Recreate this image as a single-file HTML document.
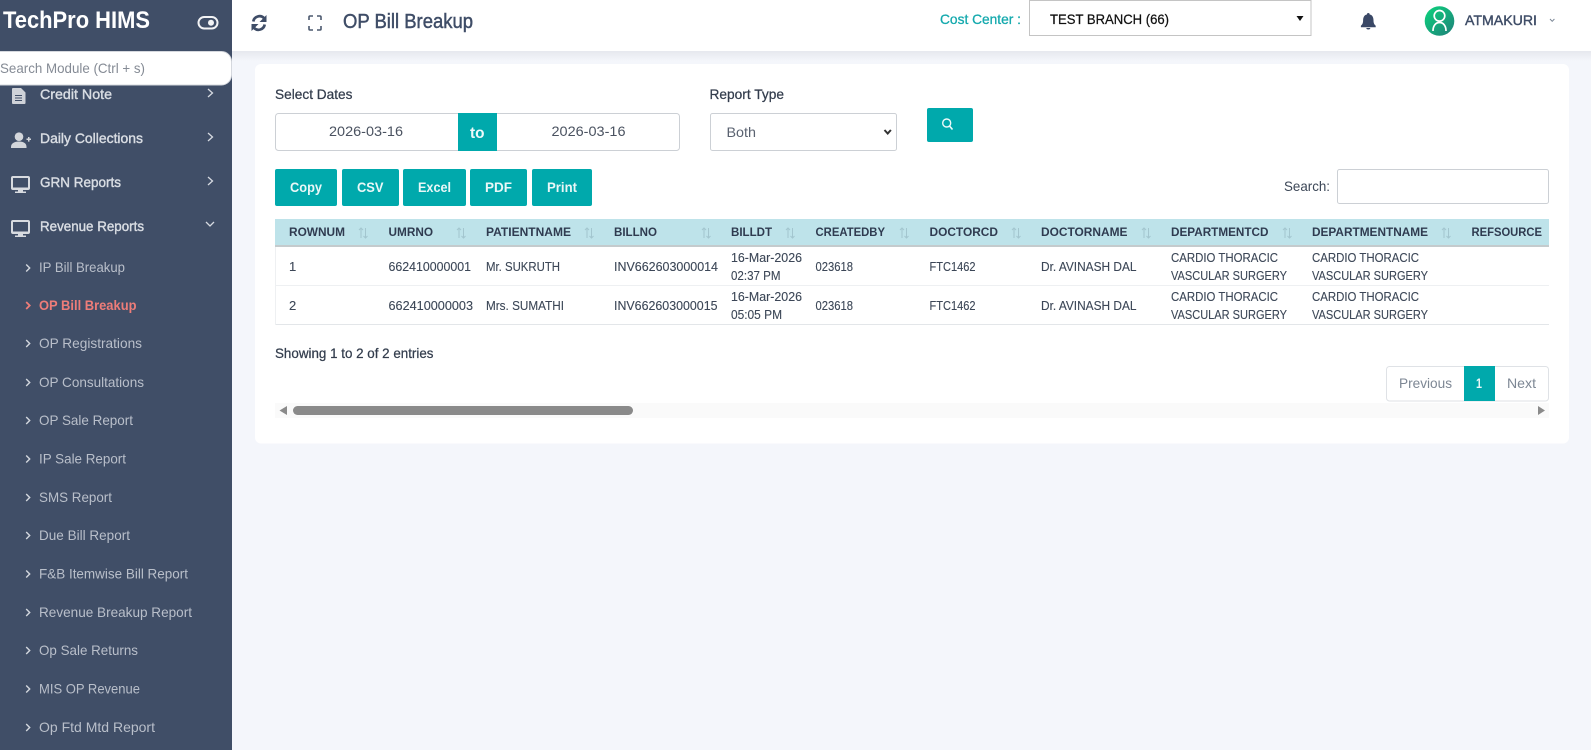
<!DOCTYPE html>
<html lang="en">
<head>
<meta charset="utf-8">
<title>OP Bill Breakup</title>
<style>
html,body{margin:0;padding:0;width:1591px;height:750px;overflow:hidden;background:#f4f6fb}
svg{display:block;position:absolute;left:0;top:0}
text{font-family:"Liberation Sans",sans-serif;font-size:13px;fill:#3a4657;white-space:pre}
.par{font-size:14px;fill:#d9dde3;stroke:#d9dde3;stroke-width:.4px}
.sub{font-size:14px;fill:#b9bfca}
.th{font-size:12px;font-weight:bold;fill:#2f3b50}
.td{font-size:13px;fill:#3c4757;stroke:#3c4757;stroke-width:.12px}
.btn{font-size:14px;font-weight:bold;fill:#e9f7f7}
.lab{font-size:14px;fill:#333d4d;stroke:#333d4d;stroke-width:.25px}
.pg{font-size:14px;fill:#7d8794}
</style>
</head>
<body>
<svg width="1591" height="750" viewBox="0 0 1591 750" xmlns="http://www.w3.org/2000/svg">
<defs>
<linearGradient id="sh" x1="0" y1="0" x2="0" y2="1"><stop offset="0" stop-color="#e6e8ee"/><stop offset="1" stop-color="#f4f6fb"/></linearGradient>
<linearGradient id="av" x1="0" y1="0" x2="1" y2="1"><stop offset="0" stop-color="#0bd57c"/><stop offset="1" stop-color="#1f7f7a"/></linearGradient>
</defs>

<!-- page + top bar -->
<rect width="1591" height="750" fill="#f4f6fb"/>
<rect x="232" y="51" width="1359" height="10" fill="url(#sh)"/>
<rect x="232" y="0" width="1359" height="51" fill="#fff"/>

<!-- sidebar -->
<rect x="0" y="0" width="232" height="750" fill="#404e67"/>
<text x="3" y="28" style="font-size:24px;font-weight:bold;fill:#fff" textLength="147" lengthAdjust="spacingAndGlyphs">TechPro HIMS</text>
<rect x="198.500" y="17" width="19" height="11.500" rx="5.700" fill="none" stroke="#f2f3f5" stroke-width="2"/>
<circle cx="211" cy="22.700" r="3" fill="#f2f3f5"/>

<!-- sidebar parent items -->
<text class="par" x="40" y="99" textLength="72" lengthAdjust="spacingAndGlyphs">Credit Note</text>
<text class="par" x="40" y="143" textLength="103" lengthAdjust="spacingAndGlyphs">Daily Collections</text>
<text class="par" x="40" y="187" textLength="81" lengthAdjust="spacingAndGlyphs">GRN Reports</text>
<text class="par" x="40" y="231" textLength="104" lengthAdjust="spacingAndGlyphs">Revenue Reports</text>
<g fill="none" stroke="#d6dae1" stroke-width="1.300">
<path d="M208 89l4.500 4-4.500 4"/>
<path d="M208 133l4.500 4-4.500 4"/>
<path d="M208 177l4.500 4-4.500 4"/>
<path d="M206 222l4 4 4-4"/>
</g>
<!-- icons -->
<path d="M13 88h8l4.500 4.500V103a1 1 0 0 1-1 1H13a1 1 0 0 1-1-1V89a1 1 0 0 1 1-1z" fill="#cfd2d8"/>
<path d="M15 95.500h7M15 98h7M15 100.500h7" stroke="#404e67" stroke-width="1"/>
<circle cx="19" cy="136.700" r="4.300" fill="#d3d6db"/>
<path d="M11 148v-1c0-3.500 3-5.500 8-5.500s7.500 2 7.500 5.500v1z" fill="#d3d6db"/>
<path d="M26.500 139.300h4.500M28.750 137v4.600" stroke="#d3d6db" stroke-width="1.500"/>
<g fill="#d8dbe0">
<path d="M13 176h15a2 2 0 0 1 2 2v10a2 2 0 0 1-2 2H13a2 2 0 0 1-2-2v-10a2 2 0 0 1 2-2zm0 2v9.500h15V178z" fill-rule="evenodd"/>
<path d="M18 190h5v1.500h3V193h-11v-1.500h3z"/>
<path d="M13 220h15a2 2 0 0 1 2 2v10a2 2 0 0 1-2 2H13a2 2 0 0 1-2-2v-10a2 2 0 0 1 2-2zm0 2v9.500h15V222z" fill-rule="evenodd"/>
<path d="M18 234h5v1.500h3V237h-11v-1.500h3z"/>
</g>

<!-- sidebar search -->
<rect x="-12" y="51.500" width="243.500" height="33.500" rx="10" fill="#fff" stroke="#d5d8de"/>
<text x="0" y="73" style="font-size:14px;fill:#858b95" textLength="145" lengthAdjust="spacingAndGlyphs">Search Module (Ctrl + s)</text>

<!-- sidebar sub items -->
<text class="sub" x="39" y="272" textLength="86" lengthAdjust="spacingAndGlyphs">IP Bill Breakup</text>
<text x="39" y="310" style="font-size:14px;font-weight:bold;fill:#ee7d79" textLength="97.500" lengthAdjust="spacingAndGlyphs">OP Bill Breakup</text>
<text class="sub" x="39" y="348" textLength="103" lengthAdjust="spacingAndGlyphs">OP Registrations</text>
<text class="sub" x="39" y="387" textLength="105" lengthAdjust="spacingAndGlyphs">OP Consultations</text>
<text class="sub" x="39" y="425" textLength="94" lengthAdjust="spacingAndGlyphs">OP Sale Report</text>
<text class="sub" x="39" y="463.500" textLength="87" lengthAdjust="spacingAndGlyphs">IP Sale Report</text>
<text class="sub" x="39" y="502" textLength="73" lengthAdjust="spacingAndGlyphs">SMS Report</text>
<text class="sub" x="39" y="540" textLength="91" lengthAdjust="spacingAndGlyphs">Due Bill Report</text>
<text class="sub" x="39" y="578.500" textLength="149" lengthAdjust="spacingAndGlyphs">F&amp;B Itemwise Bill Report</text>
<text class="sub" x="39" y="617" textLength="153" lengthAdjust="spacingAndGlyphs">Revenue Breakup Report</text>
<text class="sub" x="39" y="655" textLength="99" lengthAdjust="spacingAndGlyphs">Op Sale Returns</text>
<text class="sub" x="39" y="693.500" textLength="101" lengthAdjust="spacingAndGlyphs">MIS OP Revenue</text>
<text class="sub" x="39" y="732" textLength="116" lengthAdjust="spacingAndGlyphs">Op Ftd Mtd Report</text>
<g fill="none" stroke="#d3d7de" stroke-width="1.400">
<path d="M26.200 264.500l3.500 3.500-3.500 3.500"/>
<path d="M26.200 302l3.500 3.500-3.500 3.500" stroke="#ee7d79" stroke-width="1.800"/>
<path d="M26.200 340l3.500 3.500-3.500 3.500"/>
<path d="M26.200 379l3.500 3.500-3.500 3.500"/>
<path d="M26.200 417l3.500 3.500-3.500 3.500"/>
<path d="M26.200 455.500l3.500 3.500-3.500 3.500"/>
<path d="M26.200 494l3.500 3.500-3.500 3.500"/>
<path d="M26.200 532l3.500 3.500-3.500 3.500"/>
<path d="M26.200 570.500l3.500 3.500-3.500 3.500"/>
<path d="M26.200 609l3.500 3.500-3.500 3.500"/>
<path d="M26.200 647l3.500 3.500-3.500 3.500"/>
<path d="M26.200 685.500l3.500 3.500-3.500 3.500"/>
<path d="M26.200 724l3.500 3.500-3.500 3.500"/>
</g>

<!-- top bar content -->
<g fill="none" stroke="#3f4d67" stroke-width="2.700">
<path d="M253.300 21.500a6.300 6.300 0 0 1 10.800-3.300l1.500 1.500"/>
<path d="M264.700 24.500a6.300 6.300 0 0 1-10.800 3.300l-1.500-1.500"/>
</g>
<path d="M266.500 15v7h-7zM251.500 31v-7h7z" fill="#3f4d67"/>
<path d="M309 20v-3a1 1 0 0 1 1-1h3M317 16h3a1 1 0 0 1 1 1v3M321 26v3a1 1 0 0 1-1 1h-3M313 30h-3a1 1 0 0 1-1-1v-3" fill="none" stroke="#4b586e" stroke-width="1.600"/>
<text x="343" y="28" style="font-size:20px;fill:#3f4d67;stroke:#3f4d67;stroke-width:.45px" textLength="130" lengthAdjust="spacingAndGlyphs">OP Bill Breakup</text>

<text x="940" y="24" style="font-size:14px;fill:#14a9ad;stroke:#14a9ad;stroke-width:.3px" textLength="81" lengthAdjust="spacingAndGlyphs">Cost Center :</text>
<rect x="1029.500" y="0.500" width="281.500" height="35" fill="#fff" stroke="#c4c4c4"/>
<text x="1050" y="24" style="font-size:14px;fill:#111;stroke:#111;stroke-width:.25px" textLength="119" lengthAdjust="spacingAndGlyphs">TEST BRANCH (66)</text>
<path d="M1296.500 16h7l-3.500 5z" fill="#111"/>

<path d="M1368.300 13a1.300 1.300 0 0 1 1.300 1.400c2.800.7 3.900 3 3.900 6 0 3.200 1 4.200 2.200 5.300v1.500h-14.800v-1.500c1.200-1.100 2.200-2.100 2.200-5.300 0-3 1.100-5.300 3.900-6a1.300 1.300 0 0 1 1.300-1.400z" fill="#3a4866"/>
<path d="M1366.300 28h4a2 1.500 0 0 1-4 0z" fill="#3a4866"/>

<circle cx="1439.500" cy="21" r="14.800" fill="url(#av)"/>
<circle cx="1439.500" cy="15.800" r="5.300" fill="none" stroke="#fff" stroke-width="1.700"/>
<path d="M1433 31c0-5 2.500-8.500 6.500-8.500s6.500 3.500 6.500 8.500" fill="none" stroke="#fff" stroke-width="1.700"/>
<text x="1465" y="25" style="font-size:14px;fill:#3f4d67;stroke:#3f4d67;stroke-width:.4px" textLength="72" lengthAdjust="spacingAndGlyphs">ATMAKURI</text>
<path d="M1550 19l2.200 2.300 2.200-2.300" fill="none" stroke="#7b8696" stroke-width="1"/>

<!-- card -->
<rect x="255" y="64" width="1314" height="379.500" rx="6" fill="#fff"/>

<text class="lab" x="275" y="99" textLength="77.500" lengthAdjust="spacingAndGlyphs">Select Dates</text>
<text class="lab" x="709.500" y="99" textLength="74.500" lengthAdjust="spacingAndGlyphs">Report Type</text>

<rect x="275.500" y="113.500" width="404" height="37" rx="3" fill="#fff" stroke="#ccd0d5"/>
<rect x="458" y="113" width="39" height="38" fill="#00a9ac"/>
<text x="329" y="136" style="font-size:14px;fill:#4a5260" textLength="74" lengthAdjust="spacingAndGlyphs">2026-03-16</text>
<text x="551.500" y="136" style="font-size:14px;fill:#4a5260" textLength="74" lengthAdjust="spacingAndGlyphs">2026-03-16</text>
<text x="470" y="138" style="font-size:16px;font-weight:bold;fill:#eefafa" textLength="14.500" lengthAdjust="spacingAndGlyphs">to</text>

<rect x="710.500" y="113.500" width="186" height="37" rx="2" fill="#fff" stroke="#ccd0d5"/>
<text x="726.500" y="137" style="font-size:14px;fill:#5a6270" textLength="29.500" lengthAdjust="spacingAndGlyphs">Both</text>
<path d="M884.500 130l3.200 3.500 3.200-3.500" fill="none" stroke="#333" stroke-width="2"/>

<rect x="927" y="108" width="46" height="34" rx="2" fill="#00a9ac"/>
<circle cx="946.700" cy="123" r="4" fill="none" stroke="#eefafa" stroke-width="1.400"/>
<path d="M949.500 126l3 3.500" stroke="#eefafa" stroke-width="1.600"/>

<!-- export buttons -->
<rect x="275" y="169" width="62" height="37" rx="2" fill="#00a9ac"/>
<rect x="342" y="169" width="57" height="37" rx="2" fill="#00a9ac"/>
<rect x="403" y="169" width="63" height="37" rx="2" fill="#00a9ac"/>
<rect x="470" y="169" width="57" height="37" rx="2" fill="#00a9ac"/>
<rect x="532" y="169" width="60" height="37" rx="2" fill="#00a9ac"/>
<text class="btn" x="290" y="192" textLength="32" lengthAdjust="spacingAndGlyphs">Copy</text>
<text class="btn" x="357" y="192" textLength="26.500" lengthAdjust="spacingAndGlyphs">CSV</text>
<text class="btn" x="418" y="192" textLength="33" lengthAdjust="spacingAndGlyphs">Excel</text>
<text class="btn" x="485" y="192" textLength="27" lengthAdjust="spacingAndGlyphs">PDF</text>
<text class="btn" x="547" y="192" textLength="30" lengthAdjust="spacingAndGlyphs">Print</text>

<text x="1284" y="191" style="font-size:14px;fill:#3c4757" textLength="46" lengthAdjust="spacingAndGlyphs">Search:</text>
<rect x="1337.500" y="169.500" width="211" height="34" rx="2" fill="#fff" stroke="#ccd0d5"/>

<!-- table -->
<rect x="275" y="219" width="1274" height="26" fill="#bee3ea"/>
<rect x="275" y="245" width="1274" height="2" fill="#c4cbcd"/>
<rect x="275" y="285" width="1274" height="1" fill="#eef0f2"/>
<rect x="275" y="324" width="1274" height="1" fill="#e3e6e9"/>
<rect x="275" y="247" width="1" height="78" fill="#eef0f2"/>

<text class="th" x="289" y="236" textLength="56" lengthAdjust="spacingAndGlyphs">ROWNUM</text>
<text class="th" x="388.500" y="236" textLength="44.500" lengthAdjust="spacingAndGlyphs">UMRNO</text>
<text class="th" x="486" y="236" textLength="85" lengthAdjust="spacingAndGlyphs">PATIENTNAME</text>
<text class="th" x="614" y="236" textLength="43" lengthAdjust="spacingAndGlyphs">BILLNO</text>
<text class="th" x="731" y="236" textLength="41" lengthAdjust="spacingAndGlyphs">BILLDT</text>
<text class="th" x="815.500" y="236" textLength="69.500" lengthAdjust="spacingAndGlyphs">CREATEDBY</text>
<text class="th" x="929.500" y="236" textLength="68.500" lengthAdjust="spacingAndGlyphs">DOCTORCD</text>
<text class="th" x="1041" y="236" textLength="86.500" lengthAdjust="spacingAndGlyphs">DOCTORNAME</text>
<text class="th" x="1171" y="236" textLength="97.500" lengthAdjust="spacingAndGlyphs">DEPARTMENTCD</text>
<text class="th" x="1312" y="236" textLength="116" lengthAdjust="spacingAndGlyphs">DEPARTMENTNAME</text>
<text class="th" x="1471.500" y="236" textLength="70.500" lengthAdjust="spacingAndGlyphs">REFSOURCE</text>

<g fill="none" stroke="#a3c6cf" stroke-width="1">
<path d="M361 238v-10M359 230l2-2 2 2M365.500 228v10M363.500 236l2 2 2-2"/>
<path d="M459 238v-10M457 230l2-2 2 2M463.500 228v10M461.500 236l2 2 2-2"/>
<path d="M587 238v-10M585 230l2-2 2 2M591.500 228v10M589.500 236l2 2 2-2"/>
<path d="M704 238v-10M702 230l2-2 2 2M708.500 228v10M706.500 236l2 2 2-2"/>
<path d="M788 238v-10M786 230l2-2 2 2M792.500 228v10M790.500 236l2 2 2-2"/>
<path d="M902 238v-10M900 230l2-2 2 2M906.500 228v10M904.500 236l2 2 2-2"/>
<path d="M1014 238v-10M1012 230l2-2 2 2M1018.500 228v10M1016.500 236l2 2 2-2"/>
<path d="M1144 238v-10M1142 230l2-2 2 2M1148.500 228v10M1146.500 236l2 2 2-2"/>
<path d="M1285 238v-10M1283 230l2-2 2 2M1289.500 228v10M1287.500 236l2 2 2-2"/>
<path d="M1444 238v-10M1442 230l2-2 2 2M1448.500 228v10M1446.500 236l2 2 2-2"/>
</g>

<!-- row 1 -->
<text class="td" x="289" y="271">1</text>
<text class="td" x="388.500" y="271" textLength="82.500" lengthAdjust="spacingAndGlyphs">662410000001</text>
<text class="td" x="486" y="271" textLength="74" lengthAdjust="spacingAndGlyphs">Mr. SUKRUTH</text>
<text class="td" x="614" y="271" textLength="104" lengthAdjust="spacingAndGlyphs">INV662603000014</text>
<text class="td" x="731" y="262" textLength="71" lengthAdjust="spacingAndGlyphs">16-Mar-2026</text>
<text class="td" x="731" y="280" textLength="49.500" lengthAdjust="spacingAndGlyphs">02:37 PM</text>
<text class="td" x="815.500" y="271" textLength="37.500" lengthAdjust="spacingAndGlyphs">023618</text>
<text class="td" x="929.500" y="271" textLength="46" lengthAdjust="spacingAndGlyphs">FTC1462</text>
<text class="td" x="1041" y="271" textLength="95.500" lengthAdjust="spacingAndGlyphs">Dr. AVINASH DAL</text>
<text class="td" x="1171" y="262" textLength="107" lengthAdjust="spacingAndGlyphs">CARDIO THORACIC</text>
<text class="td" x="1171" y="280" textLength="116" lengthAdjust="spacingAndGlyphs">VASCULAR SURGERY</text>
<text class="td" x="1312" y="262" textLength="107" lengthAdjust="spacingAndGlyphs">CARDIO THORACIC</text>
<text class="td" x="1312" y="280" textLength="116" lengthAdjust="spacingAndGlyphs">VASCULAR SURGERY</text>

<!-- row 2 -->
<text class="td" x="289" y="310">2</text>
<text class="td" x="388.500" y="310" textLength="84.500" lengthAdjust="spacingAndGlyphs">662410000003</text>
<text class="td" x="486" y="310" textLength="78" lengthAdjust="spacingAndGlyphs">Mrs. SUMATHI</text>
<text class="td" x="614" y="310" textLength="103.500" lengthAdjust="spacingAndGlyphs">INV662603000015</text>
<text class="td" x="731" y="301" textLength="71" lengthAdjust="spacingAndGlyphs">16-Mar-2026</text>
<text class="td" x="731" y="319" textLength="51" lengthAdjust="spacingAndGlyphs">05:05 PM</text>
<text class="td" x="815.500" y="310" textLength="37.500" lengthAdjust="spacingAndGlyphs">023618</text>
<text class="td" x="929.500" y="310" textLength="46" lengthAdjust="spacingAndGlyphs">FTC1462</text>
<text class="td" x="1041" y="310" textLength="95.500" lengthAdjust="spacingAndGlyphs">Dr. AVINASH DAL</text>
<text class="td" x="1171" y="301" textLength="107" lengthAdjust="spacingAndGlyphs">CARDIO THORACIC</text>
<text class="td" x="1171" y="319" textLength="116" lengthAdjust="spacingAndGlyphs">VASCULAR SURGERY</text>
<text class="td" x="1312" y="301" textLength="107" lengthAdjust="spacingAndGlyphs">CARDIO THORACIC</text>
<text class="td" x="1312" y="319" textLength="116" lengthAdjust="spacingAndGlyphs">VASCULAR SURGERY</text>

<text class="lab" x="275" y="358" textLength="158.500" lengthAdjust="spacingAndGlyphs">Showing 1 to 2 of 2 entries</text>

<!-- scrollbar -->
<rect x="275" y="403" width="1274" height="15" fill="#fafafa"/>
<path d="M287 406v9l-7.500-4.500z" fill="#8a8a8a"/>
<path d="M1538 406v9l7-4.500z" fill="#8a8a8a"/>
<rect x="293" y="406" width="340" height="9" rx="4.500" fill="#8a8a8a"/>

<!-- pagination -->
<rect x="1386.500" y="366.500" width="162" height="34.500" rx="3" fill="#fff" stroke="#dfe2e6"/>
<rect x="1464" y="366" width="31" height="35" fill="#00a9ac"/>
<text class="pg" x="1399" y="388" textLength="53" lengthAdjust="spacingAndGlyphs">Previous</text>
<text x="1476" y="388" style="font-size:14px;font-weight:bold;fill:#e9f7f7" textLength="6" lengthAdjust="spacingAndGlyphs">1</text>
<text class="pg" x="1507" y="388" textLength="29" lengthAdjust="spacingAndGlyphs">Next</text>
</svg>
</body>
</html>
